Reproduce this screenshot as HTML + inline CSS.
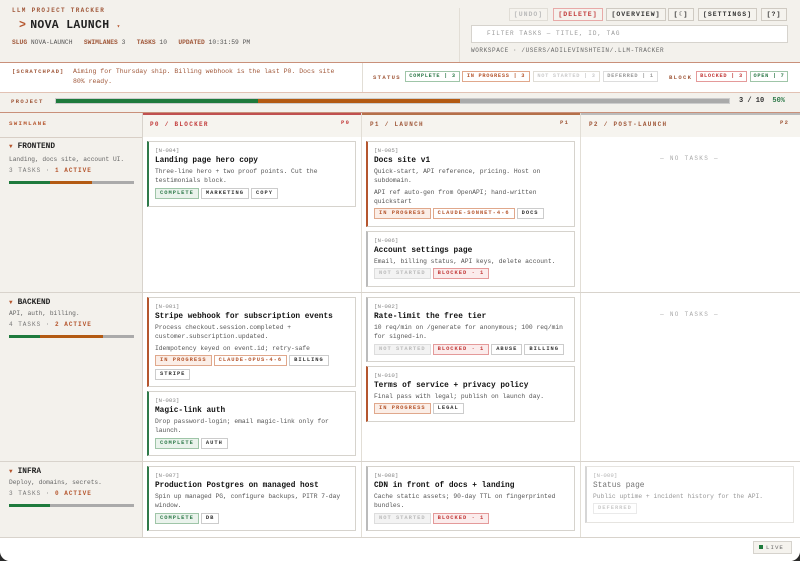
<!DOCTYPE html>
<html><head><meta charset="utf-8"><style>
*{box-sizing:border-box;margin:0;padding:0}
html,body{width:800px;height:561px;background:#2a2a2a;overflow:hidden}
body{font-family:"Liberation Mono",monospace;color:#222}
#app{position:absolute;left:0;top:0;width:800px;height:561px;background:#f3f1ec;border-radius:0 0 10px 10px;overflow:hidden}
.a{position:absolute}
.lbl{font-size:6px;letter-spacing:1.3px;font-weight:bold;color:#a0583a}
.hr{position:absolute;left:0;width:800px;height:1px}
.card{position:absolute;background:#fff;border:1px solid #d6d3cd;border-left:2px solid #aaa;padding:5px 7px 0 6px}
.card .id{font-size:5.8px;color:#888;line-height:8px}
.card .t{font-size:7.8px;font-weight:bold;line-height:12px;color:#111}
.card .d{font-size:6.3px;color:#555;line-height:9.3px;margin-bottom:2px}
.tags{margin-top:2px;line-height:0}
.tag{display:inline-block;height:11px;line-height:9px;font-size:5.4px;font-weight:bold;letter-spacing:1px;border:1px solid #ccc;padding:0 4px;margin:0 2px 3px 0;color:#333;background:#fff;vertical-align:top}
.cp{color:#2f7a4a;border-color:#9fc5a8;background:#eaf3ec}
.ip{color:#b5562e;border-color:#e0a88c;background:#fbeee7}
.ns{color:#bbb;border-color:#ddd;background:#f3f3f3}
.bl{color:#c23a3a;border-color:#e49a9a;background:#fbecec}
.mdl{color:#b5562e;border-color:#e0a88c}
.df{color:#aaa;border-color:#ddd}
.g{border-left-color:#2f7a4a}.o{border-left-color:#b5562e}.gr{border-left-color:#bbb}
.lane{position:absolute;left:9px;width:125px}
.lane .n{font-size:7.8px;font-weight:bold;line-height:10px}
.lane .n span{color:#b5562e;font-size:6px;margin-right:5px}
.lane .s{font-size:6.2px;color:#666;line-height:11px;margin-top:2px}
.lane .c{font-size:6px;letter-spacing:1px;color:#777;line-height:11px}
.lane .c b{color:#b5562e}
.bar{height:3px;margin-top:5px;display:flex;background:#aaa}
.nt{position:absolute;font-size:6px;letter-spacing:1.3px;color:#aaa;text-align:center;width:219px}
.btn{position:absolute;top:8px;height:13px;border:1px solid #cfcac2;font-size:6.5px;font-weight:bold;letter-spacing:1px;line-height:11px;text-align:center;color:#333;background:#f5f3ee}
.chip{position:absolute;top:71px;height:11px;border:1px solid;font-size:5.3px;font-weight:bold;letter-spacing:0.7px;line-height:9px;text-align:center;background:#fff;white-space:nowrap}
</style></head><body><div id="app">

<div class="a lbl" style="left:12px;top:7px;font-size:6px">LLM PROJECT TRACKER</div>
<div class="a" style="left:19px;top:19px;font-size:11.5px;font-weight:bold;letter-spacing:0.3px"><span style="color:#b5562e;margin-right:4px">&gt;</span>NOVA LAUNCH <span style="color:#b5562e;font-size:6px">▾</span></div>
<div class="a" style="left:12px;top:39px;font-size:6.3px;color:#555;white-space:pre"><b style="color:#a0583a">SLUG</b> NOVA-LAUNCH   <b style="color:#a0583a">SWIMLANES</b> 3   <b style="color:#a0583a">TASKS</b> 10   <b style="color:#a0583a">UPDATED</b> 10:31:59 PM</div>
<div class="a" style="left:459px;top:8px;width:1px;height:54px;background:#e2ded6"></div>
<div class="btn" style="left:509px;width:39px;color:#bbb;border-color:#e0ddd6">[UNDO]</div>
<div class="btn" style="left:553px;width:50px;color:#c23a3a;border-color:#e8aaa8">[DELETE]</div>
<div class="btn" style="left:606px;width:60px">[OVERVIEW]</div>
<div class="btn" style="left:668px;width:26px">[☾]</div>
<div class="btn" style="left:698px;width:59px">[SETTINGS]</div>
<div class="btn" style="left:761px;width:26px">[?]</div>
<div class="a" style="left:471px;top:25px;width:317px;height:18px;background:#fff;border:1px solid #d6d3cd;font-size:6px;letter-spacing:1px;color:#999;line-height:16px;padding-left:15px">FILTER TASKS — TITLE, ID, TAG</div>
<div class="a" style="left:471px;top:47px;font-size:6px;letter-spacing:0.6px;color:#666">WORKSPACE · /USERS/ADILEVINSHTEIN/.LLM-TRACKER</div>

<div class="hr" style="top:62px;background:#c9907a"></div>
<div class="a" style="left:0;top:63px;width:800px;height:29px;background:#fff"></div>
<div class="a lbl" style="left:12px;top:68px;font-size:5.6px;letter-spacing:1px;color:#a0583a">[SCRATCHPAD]</div>
<div class="a" style="left:73px;top:67px;width:276px;font-size:6.5px;line-height:9.5px;color:#a0583a">Aiming for Thursday ship. Billing webhook is the last P0. Docs site 80% ready.</div>
<div class="a" style="left:362px;top:63px;width:1px;height:29px;background:#e2ded6"></div>
<div class="a lbl" style="left:373px;top:74px;font-size:5.6px">STATUS</div>
<div class="chip" style="left:405px;width:55px;color:#2f7a4a;border-color:#9fc5a8">COMPLETE | 3</div>
<div class="chip" style="left:462px;width:68px;color:#b5562e;border-color:#e0a88c">IN PROGRESS | 3</div>
<div class="chip" style="left:533px;width:67px;color:#ccc;border-color:#e0ddd6">NOT STARTED | 3</div>
<div class="chip" style="left:603px;width:55px;color:#999;border-color:#ddd">DEFERRED | 1</div>
<div class="a lbl" style="left:669px;top:74px;font-size:5.6px">BLOCK</div>
<div class="chip" style="left:696px;width:51px;color:#c23a3a;border-color:#e49a9a">BLOCKED | 3</div>
<div class="chip" style="left:750px;width:38px;color:#2f7a4a;border-color:#9fc5a8">OPEN | 7</div>
<div class="hr" style="top:92px;background:#e2c2b4"></div>
<div class="a lbl" style="left:11px;top:98px;font-size:5.6px">PROJECT</div>
<div class="a" style="left:55px;top:98px;width:675px;height:6px;display:flex;border:1px solid #ccc"><div style="width:30%;background:#1e7a3c"></div><div style="width:30%;background:#b35a12"></div><div style="flex:1;background:#aaa"></div></div>
<div class="a" style="left:739px;top:97px;font-size:7px;font-weight:bold;color:#333">3 / 10 <b style="color:#2f7a4a;margin-left:4px">50%</b></div>
<div class="hr" style="top:112px;background:#c9907a"></div>

<div class="a" style="left:142px;top:113px;width:658px;height:24px;background:#f6f4ef"></div>
<div class="a" style="left:142px;top:113px;width:220px;height:2px;background:#c05050"></div>
<div class="a" style="left:362px;top:113px;width:218px;height:2px;background:#b5704a"></div>
<div class="a" style="left:580px;top:113px;width:220px;height:2px;background:#bbb"></div>
<div class="a lbl" style="left:9px;top:120px;color:#b5562e;font-size:5.8px">SWIMLANE</div>
<div class="a lbl" style="left:150px;top:121px;color:#c23a3a">P0 / BLOCKER</div><div class="a lbl" style="left:341px;top:119px;color:#c23a3a;font-size:5.5px">P0</div>
<div class="a lbl" style="left:370px;top:121px">P1 / LAUNCH</div><div class="a lbl" style="left:560px;top:119px;font-size:5.5px">P1</div>
<div class="a lbl" style="left:589px;top:121px">P2 / POST-LAUNCH</div><div class="a lbl" style="left:780px;top:119px;font-size:5.5px">P2</div>
<div class="hr" style="top:137px;background:#d8cfc6"></div>

<div class="a" style="left:142px;top:137px;width:658px;height:400px;background:#fff"></div>
<div class="a" style="left:142px;top:113px;width:1px;height:424px;background:#d8d3cc"></div>
<div class="a" style="left:361px;top:113px;width:1px;height:424px;background:#e2ded6"></div>
<div class="a" style="left:580px;top:113px;width:1px;height:424px;background:#e2ded6"></div>
<div class="hr" style="top:292px;background:#d8d3cc"></div>
<div class="hr" style="top:461px;background:#d8d3cc"></div>
<div class="hr" style="top:537px;background:#d8d3cc"></div>

<div class="lane" style="top:142px"><div class="n"><span>▼</span>FRONTEND</div><div class="s">Landing, docs site, account UI.</div><div class="c">3 TASKS · <b>1 ACTIVE</b></div><div class="bar"><div style="width:33%;background:#1e7a3c"></div><div style="width:33%;background:#b35a12"></div></div></div>
<div class="lane" style="top:298px"><div class="n"><span>▼</span>BACKEND</div><div class="s" style="margin-top:0">API, auth, billing.</div><div class="c">4 TASKS · <b>2 ACTIVE</b></div><div class="bar"><div style="width:25%;background:#1e7a3c"></div><div style="width:50%;background:#b35a12"></div></div></div>
<div class="lane" style="top:467px"><div class="n"><span>▼</span>INFRA</div><div class="s" style="margin-top:0">Deploy, domains, secrets.</div><div class="c">3 TASKS · <b>0 ACTIVE</b></div><div class="bar"><div style="width:33%;background:#1e7a3c"></div></div></div>

<div class="card g" style="left:147px;top:141px;width:209px;height:66px"><div class="id">[N-004]</div><div class="t">Landing page hero copy</div><div class="d">Three-line hero + two proof points. Cut the testimonials block.</div><div class="tags"><span class="tag cp">COMPLETE</span><span class="tag">MARKETING</span><span class="tag">COPY</span></div></div>

<div class="card o" style="left:366px;top:141px;width:209px;height:86px"><div class="id">[N-005]</div><div class="t">Docs site v1</div><div class="d">Quick-start, API reference, pricing. Host on subdomain.</div><div class="d">API ref auto-gen from OpenAPI; hand-written quickstart</div><div class="tags"><span class="tag ip">IN PROGRESS</span><span class="tag mdl">CLAUDE-SONNET-4-6</span><span class="tag">DOCS</span></div></div>

<div class="card gr" style="left:366px;top:231px;width:209px;height:56px"><div class="id">[N-006]</div><div class="t">Account settings page</div><div class="d">Email, billing status, API keys, delete account.</div><div class="tags"><span class="tag ns">NOT STARTED</span><span class="tag bl">BLOCKED · 1</span></div></div>

<div class="nt" style="left:580px;top:155px">— NO TASKS —</div>
<div class="nt" style="left:580px;top:311px">— NO TASKS —</div>

<div class="card o" style="left:147px;top:297px;width:209px;height:90px"><div class="id">[N-001]</div><div class="t">Stripe webhook for subscription events</div><div class="d">Process checkout.session.completed + customer.subscription.updated.</div><div class="d">Idempotency keyed on event.id; retry-safe</div><div class="tags"><span class="tag ip">IN PROGRESS</span><span class="tag mdl">CLAUDE-OPUS-4-6</span><span class="tag">BILLING</span><span class="tag">STRIPE</span></div></div>

<div class="card g" style="left:147px;top:391px;width:209px;height:65px"><div class="id">[N-003]</div><div class="t">Magic-link auth</div><div class="d">Drop password-login; email magic-link only for launch.</div><div class="tags"><span class="tag cp">COMPLETE</span><span class="tag">AUTH</span></div></div>

<div class="card gr" style="left:366px;top:297px;width:209px;height:65px"><div class="id">[N-002]</div><div class="t">Rate-limit the free tier</div><div class="d">10 req/min on /generate for anonymous; 100 req/min for signed-in.</div><div class="tags"><span class="tag ns">NOT STARTED</span><span class="tag bl">BLOCKED · 1</span><span class="tag">ABUSE</span><span class="tag">BILLING</span></div></div>

<div class="card o" style="left:366px;top:366px;width:209px;height:56px"><div class="id">[N-010]</div><div class="t">Terms of service + privacy policy</div><div class="d">Final pass with legal; publish on launch day.</div><div class="tags"><span class="tag ip">IN PROGRESS</span><span class="tag">LEGAL</span></div></div>

<div class="card g" style="left:147px;top:466px;width:209px;height:65px"><div class="id">[N-007]</div><div class="t">Production Postgres on managed host</div><div class="d">Spin up managed PG, configure backups, PITR 7-day window.</div><div class="tags"><span class="tag cp">COMPLETE</span><span class="tag">DB</span></div></div>

<div class="card gr" style="left:366px;top:466px;width:209px;height:65px"><div class="id">[N-008]</div><div class="t">CDN in front of docs + landing</div><div class="d">Cache static assets; 90-day TTL on fingerprinted bundles.</div><div class="tags"><span class="tag ns">NOT STARTED</span><span class="tag bl">BLOCKED · 1</span></div></div>

<div class="card gr" style="left:585px;top:466px;width:209px;height:57px;opacity:.6"><div class="id">[N-009]</div><div class="t" style="font-weight:normal">Status page</div><div class="d">Public uptime + incident history for the API.</div><div class="tags"><span class="tag df">DEFERRED</span></div></div>

<div class="a" style="left:0;top:538px;width:800px;height:23px;background:#fff"></div>
<div class="a" style="left:753px;top:541px;width:39px;height:13px;border:1px solid #d6d3cd;background:#f5f3ee;font-size:5.8px;letter-spacing:1px;color:#666;line-height:11px;padding-left:5px"><span style="display:inline-block;width:4px;height:4px;background:#1e7a3c;margin-right:3px"></span>LIVE</div>
</div></body></html>
